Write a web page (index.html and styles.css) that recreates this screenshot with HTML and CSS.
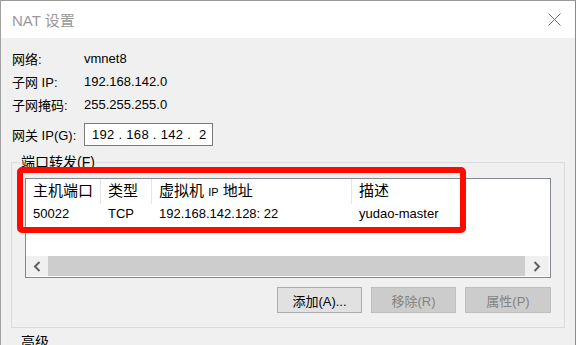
FILE: index.html
```html
<!DOCTYPE html>
<html lang="zh-CN">

<head>
    <meta charset="UTF-8" />
    <title>NAT 设置</title>
    <link rel="stylesheet" href="styles.css">
</head>

<body>
    <div class="window">
        <div class="titlebar">
            <span class="title">NAT 设置</span>
            <svg class="close" width="13" height="13" viewBox="0 0 13 13">
                <path d="M0.5 0.5 L12.5 12.5 M12.5 0.5 L0.5 12.5" stroke="#6b6b6b" stroke-width="1" fill="none" />
            </svg>
        </div>

        <div class="content">
            <div class="info">
                <span class="label">网络:</span><span class="value">vmnet8</span>
                <span class="label">子网 IP:</span><span class="value">192.168.142.0</span>
                <span class="label">子网掩码:</span><span class="value">255.255.255.0</span>
            </div>

            <div class="gateway">
                <span class="label">网关 IP(G):</span>
                <div class="ipbox">192 . 168 . 142 .&nbsp; 2</div>
            </div>

            <fieldset class="group">
                <legend>端口转发(F)</legend>
                <div class="group-inner">
                    <div class="listview">
                        <div class="lv-row lv-head">
                            <span>主机端口</span>
                            <span>类型</span>
                            <span>虚拟机 <small>IP</small> 地址</span>
                            <span>描述</span>
                        </div>
                        <div class="lv-row lv-item">
                            <span>50022</span>
                            <span>TCP</span>
                            <span>192.168.142.128: 22</span>
                            <span>yudao-master</span>
                        </div>
                        <div class="lv-fill"></div>
                        <div class="hscroll">
                            <div class="sb-btn">
                                <svg width="8" height="11" viewBox="0 0 8 11">
                                    <path d="M6.5 1 L2 5.5 L6.5 10" stroke="#606060" stroke-width="2" fill="none" />
                                </svg>
                            </div>
                            <div class="sb-thumb"></div>
                            <div class="sb-btn sb-right">
                                <svg width="8" height="11" viewBox="0 0 8 11">
                                    <path d="M1.5 1 L6 5.5 L1.5 10" stroke="#606060" stroke-width="2" fill="none" />
                                </svg>
                            </div>
                        </div>
                    </div>

                    <div class="buttons">
                        <button class="btn">添加(A)...</button>
                        <button class="btn" disabled>移除(R)</button>
                        <button class="btn" disabled>属性(P)</button>
                    </div>
                </div>
            </fieldset>

            <div class="section-label">高级</div>
        </div>

        <div class="highlight"></div>
    </div>
</body>

</html>
```

FILE: styles.css
```css
*,
*::before,
*::after {
    box-sizing: border-box;
}

html,
body {
    margin: 0;
    padding: 0;
    width: 576px;
    height: 345px;
    overflow: hidden;
    background: #f0f0f0;
    font-family: 'Liberation Sans', 'Noto Sans CJK SC', sans-serif;
    font-size: 13px;
    color: #000;
}

.window {
    position: relative;
    width: 576px;
    height: 345px;
    border-top: 1px solid #9a9a9a;
    border-left: 1px solid #a0a0a0;
    border-right: 1px solid #8a8a8a;
    background: #f0f0f0;
    overflow: hidden;
}

/* title bar */
.titlebar {
    height: 37px;
    background: #fff;
    display: flex;
    align-items: center;
    justify-content: space-between;
    padding: 0 14px 0 11px;
}

.title {
    font-size: 15px;
    color: #9a9a9a;
}

.close {
    display: block;
}

/* dialog body */
.content {
    padding: 9px 10px 0 10px;
}

.info {
    display: grid;
    grid-template-columns: 72px 1fr;
    grid-auto-rows: 23px;
    align-items: center;
    padding-left: 1px;
}

.gateway {
    display: flex;
    align-items: center;
    margin-top: 7px;
    padding-left: 1px;
}

.gateway .label {
    width: 72px;
}

.ipbox {
    width: 129px;
    height: 23px;
    border: 1px solid #7a7a7a;
    background: #fff;
    padding: 0 7px;
    display: flex;
    align-items: center;
    white-space: pre;
    letter-spacing: 0.3px;
}

/* group box */
.group {
    margin: 8px 0 0 0;
    padding: 0;
    border: 1px solid #dcdcdc;
    min-width: 0;
}

.group legend {
    margin-left: 8px;
    padding: 0 1px;
    line-height: 16px;
    font-size: 14px;
}

.group-inner {
    padding: 8px 13px 14px 13px;
}

.section-label {
    margin: 6px 0 0 10px;
    font-size: 14px;
    line-height: 16px;
}

/* list view */
.listview {
    height: 100px;
    border: 1px solid #828790;
    background: #fff;
    display: flex;
    flex-direction: column;
}

.lv-row {
    display: grid;
    grid-template-columns: 75px 51px 200px 1fr;
}

.lv-row span {
    padding-left: 7px;
    white-space: nowrap;
}

.lv-head {
    height: 24px;
    font-size: 15px;
}

.lv-head span {
    line-height: 24px;
    border-right: 1px solid #e5e5e5;
}

.lv-head span:last-child {
    border-right: none;
}

.lv-head small {
    font-size: 11px;
}

.lv-item {
    height: 21px;
    align-items: center;
}

.lv-fill {
    flex: 1;
}

.hscroll {
    height: 20px;
    margin: 0 1px 1px 0;
    display: flex;
    background: #f0f0f0;
}

.sb-btn {
    width: 22px;
    display: flex;
    align-items: center;
    justify-content: center;
}

.sb-right {
    width: 24px;
}

.sb-thumb {
    flex: 1;
    background: #cdcdcd;
}

/* buttons */
.buttons {
    display: flex;
    justify-content: flex-end;
    gap: 9px;
    margin-top: 9px;
}

.btn {
    width: 85px;
    height: 26px;
    border: 1px solid #adadad;
    background: #e1e1e1;
    font-family: inherit;
    font-size: 13px;
    color: #000;
    padding: 0;
}

.btn:last-child {
    width: 86px;
}

.btn:disabled {
    background: #cccccc;
    border-color: #bfbfbf;
    color: #838383;
}

/* annotation frame drawn over the screenshot */
.highlight {
    position: absolute;
    left: 16px;
    top: 166px;
    width: 449px;
    height: 66px;
    border: 6px solid #fe0a00;
    border-radius: 5px;
    pointer-events: none;
}
```
